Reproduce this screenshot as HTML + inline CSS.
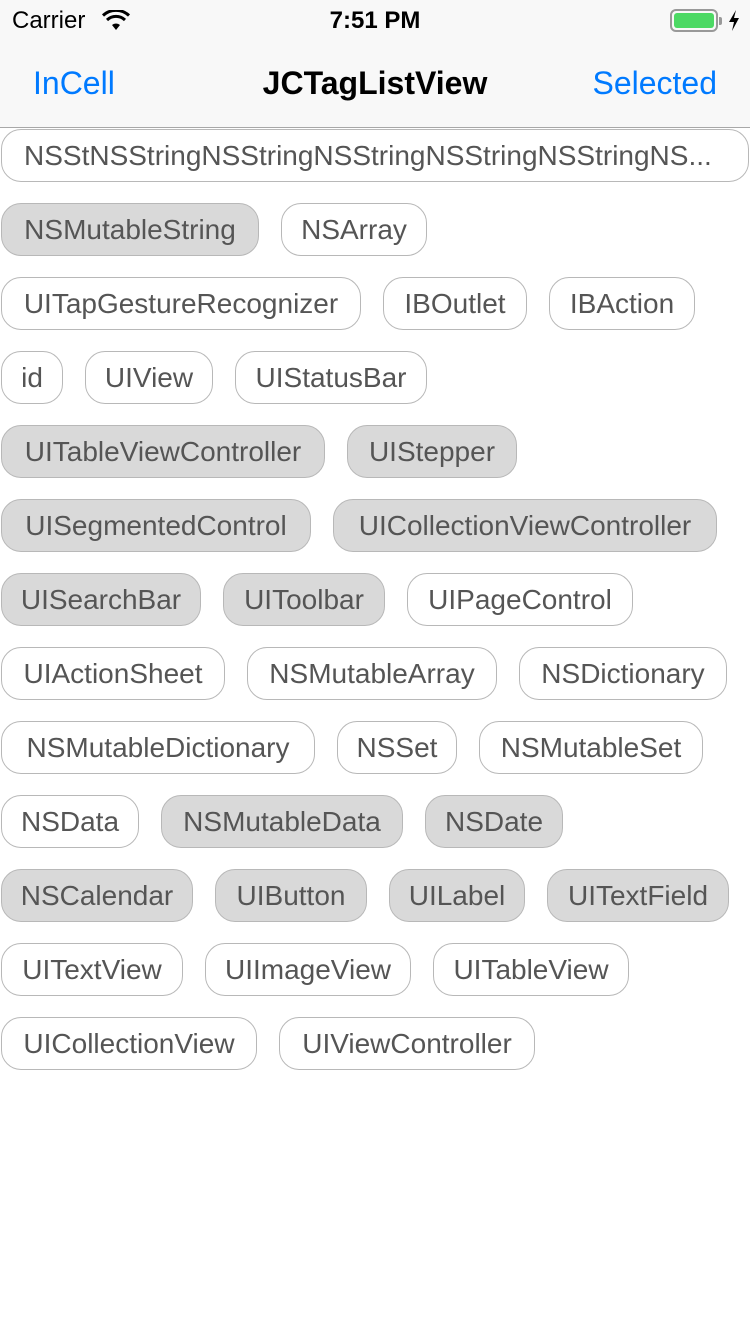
<!DOCTYPE html>
<html><head><meta charset="utf-8"><style>
*{margin:0;padding:0;box-sizing:border-box}
body{width:750px;height:1334px;background:#fff;font-family:"Liberation Sans",sans-serif;position:relative;overflow:hidden}
.nav{position:absolute;left:0;top:0;width:750px;height:128px;background:#f8f8f8;border-bottom:1px solid #a8a8a8}
.t{position:absolute;height:53px;border:1px solid #b8b8b8;border-radius:20px;background:#fff;color:#555;font-size:28px;line-height:51px;text-align:center;white-space:nowrap;overflow:hidden;letter-spacing:0}
.g{background:#d9d9d9}
</style></head><body>
<div class="nav">
<div style="position:absolute;left:12px;top:7px;font-size:24px;color:#000">Carrier</div>
<svg style="position:absolute;left:101px;top:10px" width="30" height="22" viewBox="0 0 30 22"><path d="M15 20 L11 15 A6 6 0 0 1 19 15 Z" fill="#000"/><path d="M6 10 A13 13 0 0 1 24 10" stroke="#000" stroke-width="3" fill="none"/><path d="M2 5.5 A19 19 0 0 1 28 5.5" stroke="#000" stroke-width="3" fill="none"/></svg>
<div style="position:absolute;left:0;width:750px;top:7px;text-align:center;font-size:24px;font-weight:bold;color:#000">7:51 PM</div>
<div style="position:absolute;left:670px;top:9px;width:48px;height:23px;border:2px solid #999;border-radius:6px;padding:2px"><div style="width:100%;height:100%;background:#4cd964;border-radius:3px"></div></div>
<div style="position:absolute;left:719px;top:17px;width:3px;height:8px;background:#999;border-radius:0 2px 2px 0"></div>
<svg style="position:absolute;left:728px;top:10px" width="12" height="21" viewBox="0 0 12 21"><path d="M8 0 L1 12 L6 12 L4 21 L11 8 L6 8 Z" fill="#000"/></svg>
<div style="position:absolute;left:33px;top:65px;font-size:32px;color:#007aff">InCell</div>
<div style="position:absolute;left:0;width:750px;top:65px;text-align:center;font-size:32px;font-weight:bold;color:#000">JCTagListView</div>
<div style="position:absolute;right:33px;top:65px;font-size:32px;color:#007aff">Selected</div>
</div>
<div class="t" style="left:1px;top:129px;width:748px;text-align:left;padding-left:22px">NSStNSStringNSStringNSStringNSStringNSStringNS...</div>
<div class="t g" style="left:1px;top:203px;width:258px">NSMutableString</div>
<div class="t" style="left:281px;top:203px;width:146px">NSArray</div>
<div class="t" style="left:1px;top:277px;width:360px">UITapGestureRecognizer</div>
<div class="t" style="left:383px;top:277px;width:144px">IBOutlet</div>
<div class="t" style="left:549px;top:277px;width:146px">IBAction</div>
<div class="t" style="left:1px;top:351px;width:62px">id</div>
<div class="t" style="left:85px;top:351px;width:128px">UIView</div>
<div class="t" style="left:235px;top:351px;width:192px">UIStatusBar</div>
<div class="t g" style="left:1px;top:425px;width:324px">UITableViewController</div>
<div class="t g" style="left:347px;top:425px;width:170px">UIStepper</div>
<div class="t g" style="left:1px;top:499px;width:310px">UISegmentedControl</div>
<div class="t g" style="left:333px;top:499px;width:384px">UICollectionViewController</div>
<div class="t g" style="left:1px;top:573px;width:200px">UISearchBar</div>
<div class="t g" style="left:223px;top:573px;width:162px">UIToolbar</div>
<div class="t" style="left:407px;top:573px;width:226px">UIPageControl</div>
<div class="t" style="left:1px;top:647px;width:224px">UIActionSheet</div>
<div class="t" style="left:247px;top:647px;width:250px">NSMutableArray</div>
<div class="t" style="left:519px;top:647px;width:208px">NSDictionary</div>
<div class="t" style="left:1px;top:721px;width:314px">NSMutableDictionary</div>
<div class="t" style="left:337px;top:721px;width:120px">NSSet</div>
<div class="t" style="left:479px;top:721px;width:224px">NSMutableSet</div>
<div class="t" style="left:1px;top:795px;width:138px">NSData</div>
<div class="t g" style="left:161px;top:795px;width:242px">NSMutableData</div>
<div class="t g" style="left:425px;top:795px;width:138px">NSDate</div>
<div class="t g" style="left:1px;top:869px;width:192px">NSCalendar</div>
<div class="t g" style="left:215px;top:869px;width:152px">UIButton</div>
<div class="t g" style="left:389px;top:869px;width:136px">UILabel</div>
<div class="t g" style="left:547px;top:869px;width:182px">UITextField</div>
<div class="t" style="left:1px;top:943px;width:182px">UITextView</div>
<div class="t" style="left:205px;top:943px;width:206px">UIImageView</div>
<div class="t" style="left:433px;top:943px;width:196px">UITableView</div>
<div class="t" style="left:1px;top:1017px;width:256px">UICollectionView</div>
<div class="t" style="left:279px;top:1017px;width:256px">UIViewController</div>
</body></html>
